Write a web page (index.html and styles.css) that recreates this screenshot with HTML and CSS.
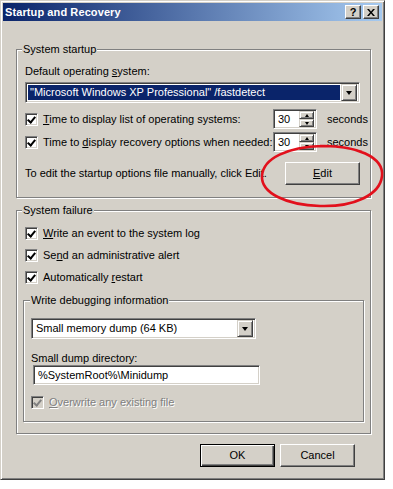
FILE: index.html
```html
<!DOCTYPE html>
<html lang="en">
<head>
    <meta charset="UTF-8">
    <title>Startup and Recovery</title>
    <link rel="stylesheet" href="styles.css">
</head>
<body>
    <div class="window">
        <div class="titlebar">
            <span class="title">Startup and Recovery</span>
            <span class="tb-btn help">?</span>
            <span class="tb-btn close">
                <svg width="8" height="7" viewBox="0 0 8 7"><path d="M0 0h2l2 2.5L6 0h2L5 3.5 8 7H6L4 4.5 2 7H0l3-3.5z" fill="#000"/></svg>
            </span>
        </div>

        <div class="content">
            <fieldset class="group startup">
                <legend>System startup</legend>
                <div class="label">Default operating <u>s</u>ystem:</div>
                <div class="combo combo-os">
                    <span class="combo-text selected">"Microsoft Windows XP Professional" /fastdetect</span>
                    <span class="combo-arrow"><i></i></span>
                </div>

                <div class="spin-row first">
                    <span class="check checked"></span>
                    <span class="row-text"><u>T</u>ime to display list of operating systems:</span>
                    <span class="spin"><span class="spin-val">30</span><span class="spin-btns"><b class="up"><i></i></b><b class="down"><i></i></b></span></span>
                    <span class="unit">seconds</span>
                </div>
                <div class="spin-row">
                    <span class="check checked"></span>
                    <span class="row-text">Time to <u>d</u>isplay recovery options when needed:</span>
                    <span class="spin"><span class="spin-val">30</span><span class="spin-btns"><b class="up"><i></i></b><b class="down"><i></i></b></span></span>
                    <span class="unit">seconds</span>
                </div>

                <div class="edit-row">
                    <span>To edit the startup options file manually, click Edit.</span>
                    <span class="button edit-btn"><u>E</u>dit</span>
                </div>
            </fieldset>

            <fieldset class="group failure">
                <legend>System failure</legend>
                <div class="check-row first"><span class="check checked"></span><span><u>W</u>rite an event to the system log</span></div>
                <div class="check-row"><span class="check checked"></span><span>Se<u>n</u>d an administrative alert</span></div>
                <div class="check-row"><span class="check checked"></span><span>Automatically <u>r</u>estart</span></div>

                <fieldset class="group debug">
                    <legend>Write debugging information</legend>
                    <div class="combo combo-dump">
                        <span class="combo-text">Small memory dump (64 KB)</span>
                        <span class="combo-arrow"><i></i></span>
                    </div>
                    <div class="label dir-label">Small dump directory:</div>
                    <div class="textbox">%SystemRoot%\Minidump</div>
                    <div class="check-row disabled"><span class="check checked"></span><span class="etched"><u>O</u>verwrite any existing file</span></div>
                </fieldset>
            </fieldset>

            <div class="actions">
                <span class="button default">OK</span>
                <span class="button">Cancel</span>
            </div>
        </div>

        <svg class="circle" width="130" height="66" viewBox="0 0 130 66">
            <path d="M62 3 C 98 2, 126 14, 124 33 C 122 52, 96 64, 62 63 C 28 62, 3 50, 4 33 C 5 15, 30 4, 64 3 C 84 3, 96 6, 104 9" fill="none" stroke="#e2101c" stroke-width="2.6"/>
        </svg>
    </div>
</body>
</html>
```

FILE: styles.css
```css
:root {
    --face: #d4d0c8;
    --shadow: #808080;
    --dark: #404040;
    --light: #ffffff;
}
* {
    margin: 0;
    padding: 0;
    box-sizing: border-box;
}
body {
    background: #fff;
    font-family: "Liberation Sans", Arial, sans-serif;
    font-size: 11px;
    line-height: 13px;
    color: #000;
}
u {
    text-decoration: underline;
    text-underline-offset: 1px;
}
.window {
    position: relative;
    width: 385px;
    height: 480px;
    background: var(--face);
    border: 1px solid;
    border-color: var(--face) var(--dark) var(--dark) var(--face);
    box-shadow: inset 1px 1px 0 var(--light), inset -1px -1px 0 var(--shadow);
    padding: 2px;
}
.titlebar {
    height: 18px;
    display: flex;
    align-items: center;
    padding: 0 3px 0 2px;
    background: linear-gradient(to right, #0a246a, #a6caf0);
}
.title {
    flex: 1;
    color: #fff;
    font-weight: bold;
    font-size: 11px;
    letter-spacing: 0.1px;
}
.tb-btn {
    width: 16px;
    height: 14px;
    display: flex;
    align-items: center;
    justify-content: center;
    background: var(--face);
    border: 1px solid;
    border-color: var(--light) var(--dark) var(--dark) var(--light);
    box-shadow: inset -1px -1px 0 var(--shadow);
    font-weight: bold;
    font-size: 11px;
    line-height: 12px;
}
.tb-btn.close {
    margin-left: 2px;
}
.content {
    padding: 22px 13px 0 13px;
}
.group {
    border: 1px solid var(--shadow);
    box-shadow: inset 1px 1px 0 var(--light), 1px 1px 0 var(--light);
    min-width: 0;
}
.group legend {
    margin-left: -1px;
    padding: 0 1px;
    background: var(--face);
    line-height: 13px;
}
.startup legend {
    margin-left: -3px;
}
.startup {
    width: 355px;
    padding: 9px 3px 12px 8px;
}
.label {
    height: 13px;
}
.combo {
    height: 21px;
    display: flex;
    align-items: center;
    background: #fff;
    border: 1px solid;
    border-color: var(--shadow) var(--light) var(--light) var(--shadow);
    box-shadow: inset 1px 1px 0 var(--dark), inset -1px -1px 0 var(--face);
    padding: 2px;
}
.combo-text {
    flex: 1;
    height: 15px;
    padding: 1px 2px 0 2px;
    white-space: nowrap;
    overflow: hidden;
}
.combo-text.selected {
    background: #0a246a;
    color: #fff;
    margin-right: 1px;
}
.combo-arrow {
    width: 16px;
    height: 17px;
    display: flex;
    align-items: center;
    justify-content: center;
    background: var(--face);
    border: 1px solid;
    border-color: var(--face) var(--dark) var(--dark) var(--face);
    box-shadow: inset 1px 1px 0 var(--light), inset -1px -1px 0 var(--shadow);
}
.combo-arrow i, .spin-btns i {
    width: 0;
    height: 0;
    border-left: 3.5px solid transparent;
    border-right: 3.5px solid transparent;
    border-top: 4px solid #000;
}
.combo-os {
    margin-top: 4px;
    width: 335px;
}
.spin-row {
    display: flex;
    align-items: center;
    height: 20px;
    margin-top: 3px;
}
.spin-row.first {
    margin-top: 6px;
}
.row-text {
    flex: 1;
    margin-left: 5px;
    white-space: nowrap;
}
.check {
    width: 13px;
    height: 13px;
    flex: none;
    background: #fff;
    border: 1px solid;
    border-color: var(--shadow) var(--light) var(--light) var(--shadow);
    box-shadow: inset 1px 1px 0 var(--dark), inset -1px -1px 0 var(--face);
    position: relative;
}
.check.checked::after {
    content: "";
    position: absolute;
    left: 3px;
    top: 1px;
    width: 3px;
    height: 6px;
    border-right: 2px solid #000;
    border-bottom: 2px solid #000;
    transform: rotate(40deg);
}
.spin {
    width: 44px;
    height: 20px;
    display: flex;
    align-items: center;
    background: #fff;
    border: 1px solid;
    border-color: var(--shadow) var(--light) var(--light) var(--shadow);
    box-shadow: inset 1px 1px 0 var(--dark), inset -1px -1px 0 var(--face);
    padding: 2px 2px 2px 4px;
}
.spin-val {
    flex: 1;
}
.spin-btns {
    width: 15px;
    height: 16px;
    display: flex;
    flex-direction: column;
}
.spin-btns b {
    flex: 1;
    display: flex;
    align-items: center;
    justify-content: center;
    background: var(--face);
    border: 1px solid;
    border-color: var(--face) var(--dark) var(--dark) var(--face);
    box-shadow: inset 1px 1px 0 var(--light), inset -1px -1px 0 var(--shadow);
}
.spin-btns b i {
    border-left-width: 2.5px;
    border-right-width: 2.5px;
    border-top-width: 3px;
}
.spin-btns b.up i {
    border-top: 0;
    border-bottom: 3px solid #000;
}
.unit {
    width: 40px;
    margin-left: 10px;
}
.edit-row {
    display: flex;
    align-items: center;
    justify-content: space-between;
    margin-top: 10px;
}
.button {
    width: 75px;
    height: 23px;
    display: flex;
    align-items: center;
    justify-content: center;
    background: var(--face);
    border: 1px solid;
    border-color: var(--light) var(--dark) var(--dark) var(--light);
    box-shadow: inset -1px -1px 0 var(--shadow);
}
.edit-btn {
    margin-right: 7px;
}
.button.default {
    border: 1px solid #000;
    box-shadow: inset 1px 1px 0 var(--light), inset -1px -1px 0 var(--dark), inset -2px -2px 0 var(--shadow);
}
.failure {
    width: 355px;
    margin-top: 6px;
    padding: 0 7px 11px 6px;
}
.check-row {
    display: flex;
    align-items: center;
    gap: 5px;
    height: 13px;
    margin: 9px 0 0 2px;
}
.check-row.first {
    margin-top: 10px;
}
.debug {
    margin-top: 10px;
    width: 341px;
    padding: 0 7px 12px 7px;
}
.combo-dump {
    width: 225px;
    margin-top: 11px;
}
.dir-label {
    margin-top: 13px;
}
.textbox {
    width: 227px;
    height: 20px;
    margin: 0 0 0 2px;
    background: #fff;
    border: 1px solid;
    border-color: var(--shadow) var(--light) var(--light) var(--shadow);
    box-shadow: inset 1px 1px 0 var(--dark), inset -1px -1px 0 var(--face);
    padding: 3px 4px;
}
.check-row.disabled {
    margin-top: 11px;
    margin-left: 0;
}
.disabled .check {
    background: var(--face);
}
.disabled .check.checked::after {
    border-color: var(--shadow);
}
.etched {
    color: var(--shadow);
    text-shadow: 1px 1px 0 var(--light);
}
.actions {
    display: flex;
    justify-content: flex-end;
    gap: 5px;
    margin: 10px 14px 0 0;
}
.circle {
    position: absolute;
    left: 257px;
    top: 142px;
}
```
